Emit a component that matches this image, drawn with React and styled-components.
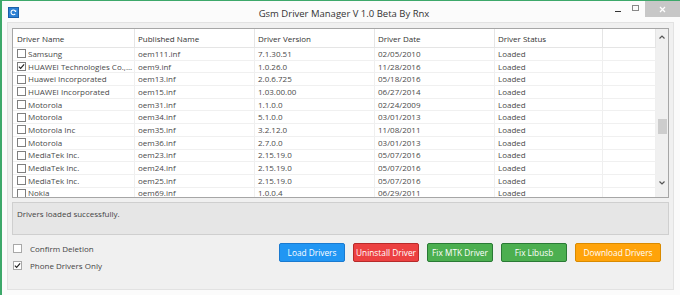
import React from 'react';
import styled, { createGlobalStyle } from 'styled-components';

const GlobalStyle = createGlobalStyle`
  html, body {
    margin: 0;
    padding: 0;
    background: #ffffff;
  }
  body {
    font-family: "Open Sans", "Noto Sans", sans-serif;
  }
`;

const Window = styled.div`
  width: 680px;
  height: 295px;
  box-sizing: border-box;
  border-top: 1px solid #3da86a;
  border-left: 2px solid #3da86a;
  background: #fbfbfb;
  display: flex;
  flex-direction: column;
  overflow: hidden;
`;

const TitleBar = styled.div`
  height: 20px;
  display: flex;
  align-items: center;
  flex-shrink: 0;
`;

const AppIcon = styled.div`
  width: 9px;
  height: 9px;
  margin-left: 6px;
  margin-top: 3px;
  background: #2b7fd4;
  border: 1px solid #1b5fa8;
  display: flex;
  align-items: center;
  justify-content: center;
`;

const Title = styled.div`
  flex: 1;
  text-align: center;
  font-size: 9.5px;
  color: #333;
  margin-top: 5px;
  margin-left: 60px;
`;

const Controls = styled.div`
  display: flex;
  align-items: flex-start;
  height: 100%;
`;

const CtrlButton = styled.div`
  width: ${p => p.w}px;
  height: 16px;
  display: flex;
  align-items: center;
  justify-content: center;
  background: ${p => p.bg || 'transparent'};
`;

const Client = styled.div`
  flex: 1;
  margin: 1px 6px 5px 5px;
  background: #f0f0f0;
  border: 1px solid #e2e2e2;
  padding: 5px 4px 0 4px;
  display: flex;
  flex-direction: column;
`;

const ListView = styled.div`
  height: 168px;
  border: 1px solid #a6a6a6;
  background: #fff;
  display: flex;
  overflow: hidden;
  flex-shrink: 0;
`;

const ListMain = styled.div`
  flex: 1;
  display: flex;
  flex-direction: column;
  overflow: hidden;
`;

const cols = '122px 120px 120px 120px 108px 1fr';

const HeaderRow = styled.div`
  display: grid;
  grid-template-columns: ${cols};
  height: 18px;
  border-bottom: 1px solid #e5e5e5;
  flex-shrink: 0;
`;

const HeaderCell = styled.div`
  font-size: 8px;
  color: #333;
  padding-left: ${p => (p.first ? 4 : 3)}px;
  display: flex;
  align-items: center;
  border-right: 1px solid #e5e5e5;
  padding-top: 1px;
`;

const Row = styled.div`
  display: grid;
  grid-template-columns: ${cols};
  height: 12.7px;
  flex-shrink: 0;
  box-sizing: border-box;
  border-bottom: 1px solid #f0f0f0;
`;

const Cell = styled.div`
  min-width: 0;
  font-size: 8px;
  color: #4a4a4a;
  padding-left: ${p => (p.first ? 4 : 3)}px;
  display: flex;
  align-items: center;
  border-right: 1px solid #efefef;
  white-space: nowrap;
  overflow: hidden;
  line-height: 12px;
`;

const Box = styled.span`
  width: ${p => p.size}px;
  height: ${p => p.size}px;
  box-sizing: border-box;
  border: 1px solid #7f7f7f;
  background: #fff;
  flex-shrink: 0;
  margin-right: ${p => p.gap}px;
  display: inline-flex;
  align-items: center;
  justify-content: center;
`;

const ScrollBar = styled.div`
  width: 12px;
  background: #f0f0f0;
  display: flex;
  flex-direction: column;
  align-items: center;
`;

const Arrow = styled.div`
  height: 12px;
  width: 12px;
  display: flex;
  align-items: center;
  justify-content: center;
  margin-top: ${p => p.top || 0}px;
`;

const Thumb = styled.div`
  width: 9px;
  height: 15px;
  background: #cdcdcd;
  margin-top: 76px;
`;

const StatusBox = styled.div`
  height: 33px;
  margin-top: 4px;
  background: #e6e6e6;
  border: 1px solid #cfcfcf;
  font-size: 8px;
  color: #444;
  padding: 5px 4px;
  box-sizing: border-box;
  flex-shrink: 0;
`;

const BottomRow = styled.div`
  display: flex;
  justify-content: space-between;
  align-items: flex-start;
  margin-top: 8px;
`;

const Checks = styled.div`
  display: flex;
  flex-direction: column;
  gap: 8px;
  padding-left: 1px;
  padding-top: 1px;
`;

const CheckLine = styled.label`
  display: flex;
  align-items: center;
  font-size: 8px;
  color: #444;
  height: 9px;
`;

const SmallBox = styled(Box)`
  border-color: #a8a8a8;
`;

const Buttons = styled.div`
  display: flex;
  gap: 8px;
  margin-right: 8px;
`;

const ActionButton = styled.button`
  width: ${p => p.w}px;
  height: 19px;
  box-sizing: border-box;
  border: 1px solid ${p => p.border};
  background: ${p => p.bg};
  color: #fff;
  border-radius: 2px;
  font-family: "Open Sans", "Noto Sans", sans-serif;
  font-size: 8.3px;
  padding: 0;
  display: flex;
  align-items: center;
  justify-content: center;
  cursor: pointer;
`;

// the list view shows names already trimmed to the column width
const drivers = [
  ['Samsung', 'oem111.inf', '7.1.30.51', '02/05/2010', false],
  ['HUAWEI Technologies Co.,...', 'oem9.inf', '1.0.26.0', '11/28/2016', true],
  ['Huawei Incorporated', 'oem13.inf', '2.0.6.725', '05/18/2016', false],
  ['HUAWEI Incorporated', 'oem15.inf', '1.03.00.00', '06/27/2014', false],
  ['Motorola', 'oem31.inf', '1.1.0.0', '02/24/2009', false],
  ['Motorola', 'oem34.inf', '5.1.0.0', '03/01/2013', false],
  ['Motorola Inc', 'oem35.inf', '3.2.12.0', '11/08/2011', false],
  ['Motorola', 'oem36.inf', '2.7.0.0', '03/01/2013', false],
  ['MediaTek Inc.', 'oem23.inf', '2.15.19.0', '05/07/2016', false],
  ['MediaTek Inc.', 'oem24.inf', '2.15.19.0', '05/07/2016', false],
  ['MediaTek Inc.', 'oem25.inf', '2.15.19.0', '05/07/2016', false],
  ['Nokia', 'oem69.inf', '1.0.0.4', '06/29/2011', false],
];

const Tick = ({ size = 7 }) => (
  <svg width={size} height={size} viewBox="0 0 8 8">
    <path d="M1 4.2 L3 6.2 L7 1.5" fill="none" stroke="#222" strokeWidth="1.3" />
  </svg>
);

const App = () => (
  <>
    <GlobalStyle />
    <Window>
      <TitleBar>
        <AppIcon>
          <svg width="7" height="7" viewBox="0 0 8 8">
            <path d="M6.5 3.2 A2.7 2.7 0 1 0 6 5.6" fill="none" stroke="#fff" strokeWidth="1.2" />
            <path d="M5 2.6 L7 3.4 L7.2 1.3 Z" fill="#fff" />
          </svg>
        </AppIcon>
        <Title>Gsm Driver Manager V 1.0 Beta By Rnx</Title>
        <Controls>
          <CtrlButton w={18}>
            <svg width="7" height="8" viewBox="0 0 7 8">
              <rect x="0" y="6" width="6" height="1" fill="#333" />
            </svg>
          </CtrlButton>
          <CtrlButton w={18}>
            <svg width="8" height="8" viewBox="0 0 8 8">
              <rect x="0.5" y="0.5" width="6" height="5" fill="none" stroke="#888" />
            </svg>
          </CtrlButton>
          <CtrlButton w={35} bg="#c7c7c7">
            <svg width="7" height="7" viewBox="0 0 7 7">
              <path d="M1 1 L6 6 M6 1 L1 6" stroke="#fff" strokeWidth="1.3" />
            </svg>
          </CtrlButton>
        </Controls>
      </TitleBar>
      <Client>
        <ListView>
          <ListMain>
            <HeaderRow>
              <HeaderCell first>Driver Name</HeaderCell>
              <HeaderCell>Published Name</HeaderCell>
              <HeaderCell>Driver Version</HeaderCell>
              <HeaderCell>Driver Date</HeaderCell>
              <HeaderCell>Driver Status</HeaderCell>
              <HeaderCell />
            </HeaderRow>
            {drivers.map(([name, inf, ver, date, checked], i) => (
              <Row key={i}>
                <Cell first>
                  <Box size={9} gap={2}>{checked && <Tick />}</Box>
                  {name}
                </Cell>
                <Cell>{inf}</Cell>
                <Cell>{ver}</Cell>
                <Cell>{date}</Cell>
                <Cell>Loaded</Cell>
                <Cell />
              </Row>
            ))}
          </ListMain>
          <ScrollBar>
            <Arrow top={2}>
              <svg width="6" height="4" viewBox="0 0 6 4">
                <path d="M0.5 3.5 L3 1 L5.5 3.5" fill="none" stroke="#555" strokeWidth="1.2" />
              </svg>
            </Arrow>
            <Thumb />
            <Arrow top={43}>
              <svg width="6" height="4" viewBox="0 0 6 4">
                <path d="M0.5 0.5 L3 3 L5.5 0.5" fill="none" stroke="#555" strokeWidth="1.2" />
              </svg>
            </Arrow>
          </ScrollBar>
        </ListView>
        <StatusBox>Drivers loaded successfully.</StatusBox>
        <BottomRow>
          <Checks>
            <CheckLine>
              <SmallBox size={9} gap={8} />
              Confirm Deletion
            </CheckLine>
            <CheckLine>
              <SmallBox size={9} gap={8}><Tick /></SmallBox>
              Phone Drivers Only
            </CheckLine>
          </Checks>
          <Buttons>
            <ActionButton w={66} bg="#2196f3" border="#1a7ad0">Load Drivers</ActionButton>
            <ActionButton w={66} bg="#ec4141" border="#b72a2a">Uninstall Driver</ActionButton>
            <ActionButton w={66} bg="#4caf50" border="#2a7a35">Fix MTK Driver</ActionButton>
            <ActionButton w={66} bg="#4caf50" border="#2a7a35">Fix Libusb</ActionButton>
            <ActionButton w={86} bg="#ffa30a" border="#d98a00">Download Drivers</ActionButton>
          </Buttons>
        </BottomRow>
      </Client>
    </Window>
  </>
);

export default App;
